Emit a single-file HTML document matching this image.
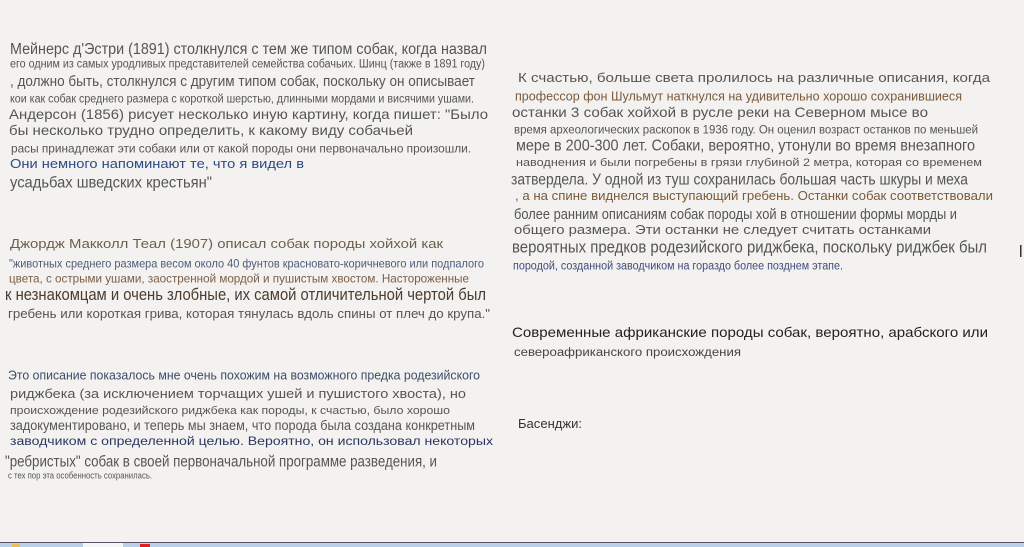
<!DOCTYPE html>
<html><head><meta charset="utf-8"><style>
html,body{margin:0;padding:0;background:#f3f2f0;width:1024px;height:547px;overflow:hidden}
svg{display:block}
text{font-family:"Liberation Sans","DejaVu Sans",sans-serif}
</style></head><body>
<svg width="1024" height="547" viewBox="0 0 1024 547" xmlns="http://www.w3.org/2000/svg">
<rect width="1024" height="547" fill="#f3f2f0"/>
<g>
<text x="10" y="54" font-size="15.5" fill="#555" textLength="477" lengthAdjust="spacingAndGlyphs">Мейнерс д'Эстри (1891) столкнулся с тем же типом собак, когда назвал</text>
<text x="10" y="67.5" font-size="11.5" fill="#555" textLength="475" lengthAdjust="spacingAndGlyphs">его одним из самых уродливых представителей семейства собачьих. Шинц (также в 1891 году)</text>
<text x="10" y="86" font-size="15" fill="#555" textLength="465" lengthAdjust="spacingAndGlyphs">, должно быть, столкнулся с другим типом собак, поскольку он описывает</text>
<text x="10" y="102.5" font-size="11.5" fill="#555" textLength="464" lengthAdjust="spacingAndGlyphs">кои как собак среднего размера с короткой шерстью, длинными мордами и висячими ушами.</text>
<text x="9" y="119" font-size="14" fill="#555" textLength="479" lengthAdjust="spacingAndGlyphs">Андерсон (1856) рисует несколько иную картину, когда пишет: "Было</text>
<text x="9" y="135" font-size="14" fill="#555" textLength="404" lengthAdjust="spacingAndGlyphs">бы несколько трудно определить, к какому виду собачьей</text>
<text x="11" y="152.5" font-size="12" fill="#555" textLength="460" lengthAdjust="spacingAndGlyphs">расы принадлежат эти собаки или от какой породы они первоначально произошли.</text>
<text x="10" y="168" font-size="12.5" fill="#2e4a86" textLength="294" lengthAdjust="spacingAndGlyphs">Они немного напоминают те, что я видел в</text>
<text x="10" y="187.5" font-size="16" fill="#555" textLength="202" lengthAdjust="spacingAndGlyphs">усадьбах шведских крестьян"</text>

<text x="10" y="248" font-size="13" fill="#6e5e4c" textLength="433" lengthAdjust="spacingAndGlyphs">Джордж Макколл Теал (1907) описал собак породы хойхой как</text>
<text x="9" y="267.5" font-size="12" fill="#4e5c78" textLength="475" lengthAdjust="spacingAndGlyphs">"животных среднего размера весом около 40 фунтов красновато-коричневого или подпалого</text>
<text x="9" y="282.5" font-size="12" fill="#7a5e48" textLength="460" lengthAdjust="spacingAndGlyphs">цвета, с острыми ушами, заостренной мордой и пушистым хвостом. Настороженные</text>
<text x="5" y="300" font-size="16.5" fill="#4a3c30" textLength="481" lengthAdjust="spacingAndGlyphs">к незнакомцам и очень злобные, их самой отличительной чертой был</text>
<text x="8" y="318" font-size="13" fill="#555" textLength="482" lengthAdjust="spacingAndGlyphs">гребень или короткая грива, которая тянулась вдоль спины от плеч до крупа."</text>

<text x="8" y="379.5" font-size="12.5" fill="#3e4c6a" textLength="472" lengthAdjust="spacingAndGlyphs">Это описание показалось мне очень похожим на возможного предка родезийского</text>
<text x="10" y="398" font-size="13" fill="#555" textLength="456" lengthAdjust="spacingAndGlyphs">риджбека (за исключением торчащих ушей и пушистого хвоста), но</text>
<text x="10" y="414" font-size="11" fill="#555" textLength="440" lengthAdjust="spacingAndGlyphs">происхождение родезийского риджбека как породы, к счастью, было хорошо</text>
<text x="10" y="430" font-size="13.5" fill="#555" textLength="465" lengthAdjust="spacingAndGlyphs">задокументировано, и теперь мы знаем, что порода была создана конкретным</text>
<text x="10" y="445" font-size="11.5" fill="#2a3660" textLength="483" lengthAdjust="spacingAndGlyphs">заводчиком с определенной целью. Вероятно, он использовал некоторых</text>
<text x="5" y="466.5" font-size="15.5" fill="#555" textLength="432" lengthAdjust="spacingAndGlyphs">"ребристых" собак в своей первоначальной программе разведения, и</text>
<text x="8" y="478.5" font-size="9" fill="#555" textLength="144" lengthAdjust="spacingAndGlyphs">с тех пор эта особенность сохранилась.</text>

<text x="518" y="82" font-size="13" fill="#555" textLength="472" lengthAdjust="spacingAndGlyphs">К счастью, больше света пролилось на различные описания, когда</text>
<text x="515" y="100.5" font-size="12.5" fill="#7a5a3a" textLength="447" lengthAdjust="spacingAndGlyphs">профессор фон Шульмут наткнулся на удивительно хорошо сохранившиеся</text>
<text x="512" y="117" font-size="14" fill="#555" textLength="416" lengthAdjust="spacingAndGlyphs">останки 3 собак хойхой в русле реки на Северном мысе во</text>
<text x="514" y="133.5" font-size="11.5" fill="#555" textLength="464" lengthAdjust="spacingAndGlyphs">время археологических раскопок в 1936 году. Он оценил возраст останков по меньшей</text>
<text x="516" y="150.5" font-size="15.5" fill="#555" textLength="459" lengthAdjust="spacingAndGlyphs">мере в 200-300 лет. Собаки, вероятно, утонули во время внезапного</text>
<text x="516" y="166" font-size="11" fill="#555" textLength="466" lengthAdjust="spacingAndGlyphs">наводнения и были погребены в грязи глубиной 2 метра, которая со временем</text>
<text x="511" y="184.5" font-size="15.5" fill="#555" textLength="457" lengthAdjust="spacingAndGlyphs">затвердела. У одной из туш сохранилась большая часть шкуры и меха</text>
<text x="515" y="200" font-size="12.5" fill="#7a5a3a" textLength="478" lengthAdjust="spacingAndGlyphs">, а на спине виднелся выступающий гребень. Останки собак соответствовали</text>
<text x="514" y="219" font-size="14.5" fill="#555" textLength="443" lengthAdjust="spacingAndGlyphs">более ранним описаниям собак породы хой в отношении формы морды и</text>
<text x="514" y="234" font-size="13" fill="#555" textLength="417" lengthAdjust="spacingAndGlyphs">общего размера. Эти останки не следует считать останками</text>
<text x="512" y="252.5" font-size="16.5" fill="#555" textLength="475" lengthAdjust="spacingAndGlyphs">вероятных предков родезийского риджбека, поскольку риджбек был</text>
<text x="513" y="269.5" font-size="11.5" fill="#3e4c7a" textLength="330" lengthAdjust="spacingAndGlyphs">породой, созданной заводчиком на гораздо более позднем этапе.</text>

<text x="512" y="337" font-size="14" fill="#222" textLength="476" lengthAdjust="spacingAndGlyphs">Современные африканские породы собак, вероятно, арабского или</text>
<text x="514" y="356" font-size="11.5" fill="#444" textLength="227" lengthAdjust="spacingAndGlyphs">североафриканского происхождения</text>
<text x="518" y="428" font-size="12.5" fill="#333" textLength="64" lengthAdjust="spacingAndGlyphs">Басенджи:</text>
</g>
<rect x="1020" y="245" width="1.5" height="12" fill="#333"/>
<rect x="0" y="542" width="1024" height="5" fill="#b9d0e8"/>
<rect x="0" y="542" width="1024" height="1" fill="#556"/>
<rect x="83" y="543" width="40" height="4" fill="#f4f6f8"/>
<rect x="140" y="544" width="10" height="3" fill="#e02020"/>
<rect x="12" y="544" width="8" height="3" fill="#e8c060"/>
</svg>
</body></html>
